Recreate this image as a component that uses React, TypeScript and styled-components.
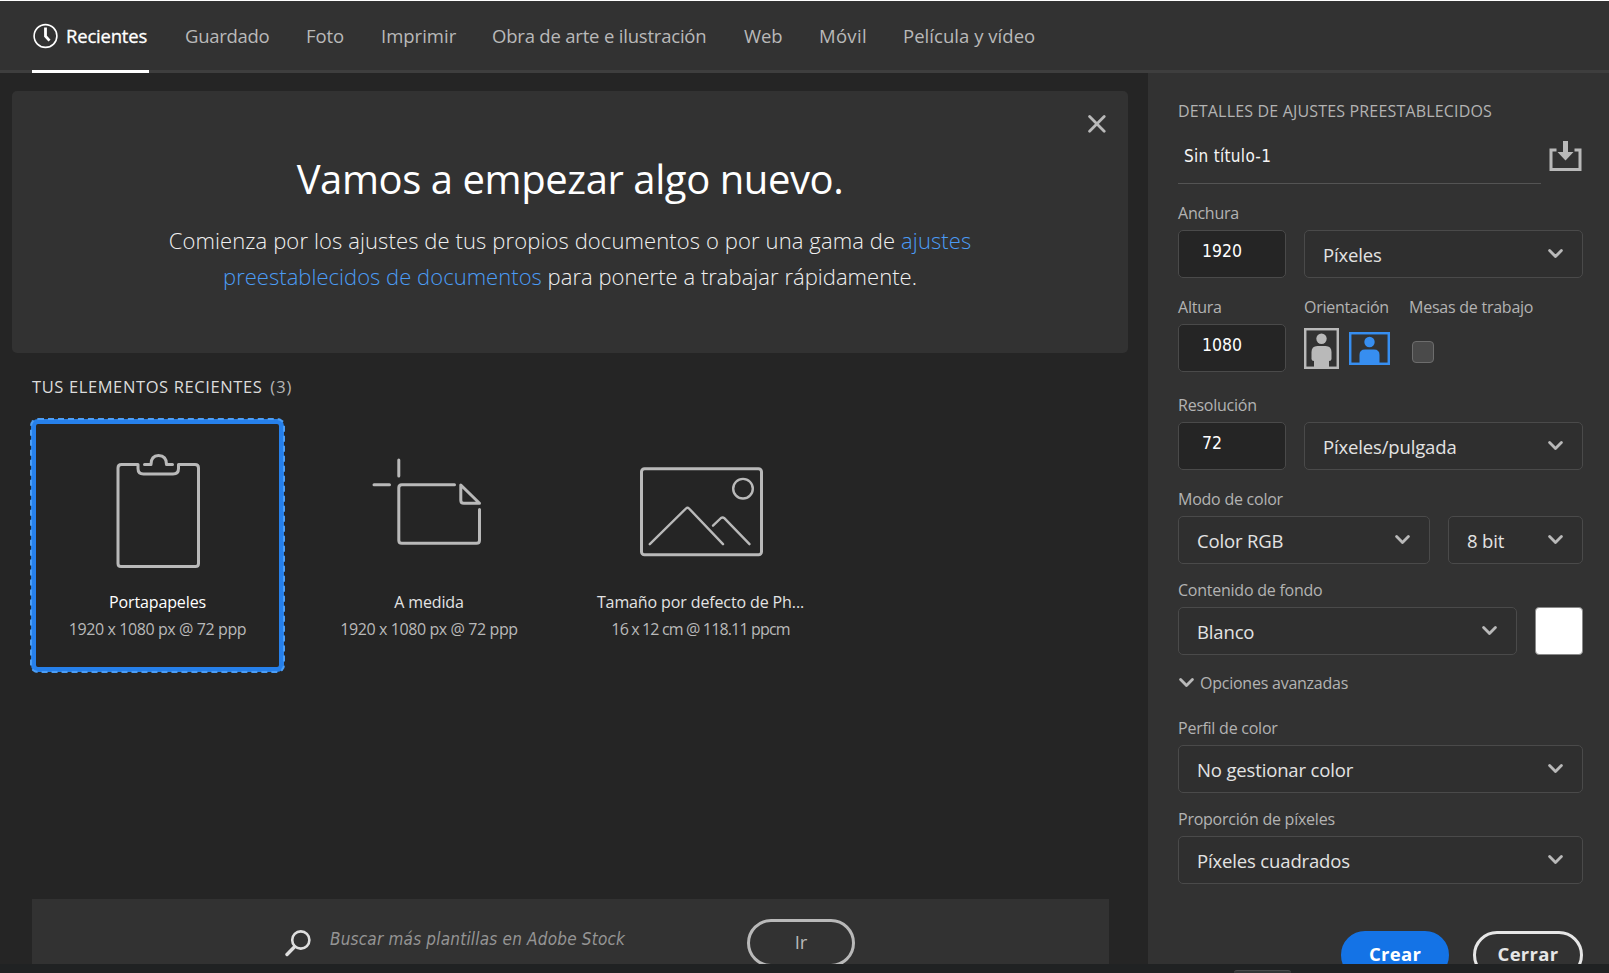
import React from 'react';
import styled, { createGlobalStyle } from 'styled-components';

const GlobalStyle = createGlobalStyle`
  *, *::before, *::after { box-sizing: border-box; }
  body {
    margin: 0;
    background: #202223;
    color: #e3e3e3;
    font-family: "Open Sans", "Noto Sans", sans-serif;
    overflow: hidden;
  }
`;

const Screen = styled.div`
  width: 1609px;
  height: 973px;
  display: flex;
  flex-direction: column;
  background: #202223;
  overflow: hidden;
`;

const Dialog = styled.div`
  height: 964px;
  display: flex;
  flex-direction: column;
  border-top: 1px solid #fff;
  background: #252525;
  overflow: hidden;
`;

const TabBar = styled.nav`
  flex: none;
  height: 72px;
  display: flex;
  gap: 36px;
  padding-left: 32px;
  background: #323232;
  box-shadow: inset 0 -3px #3e3e3e;
`;

const Tab = styled.a<{ $width: number; $active?: boolean; $spacing?: number }>`
  width: ${p => p.$width}px;
  display: flex;
  align-items: center;
  gap: 8px;
  padding-bottom: ${p => (p.$active ? 0 : 3)}px;
  border-bottom: ${p => (p.$active ? '3px solid #fff' : '0')};
  font-size: 18.5px;
  letter-spacing: ${p => p.$spacing ?? -0.1}px;
  white-space: nowrap;
  color: ${p => (p.$active ? '#fff' : '#b9b9b9')};
  -webkit-text-stroke: ${p => (p.$active ? '0.3px #fff' : '0')};
`;

const Body = styled.div`
  flex: 1;
  display: flex;
  min-height: 0;
`;

const Main = styled.main`
  width: 1148px;
  display: flex;
  flex-direction: column;
  padding: 18px 20px 0 12px;
`;

const Banner = styled.section`
  position: relative;
  flex: none;
  height: 262px;
  padding-top: 58px;
  border-radius: 5px;
  background: #323232;
  text-align: center;
`;

const CloseButton = styled.button`
  position: absolute;
  top: 24px;
  right: 22px;
  width: 18px;
  height: 18px;
  padding: 0;
  border: 0;
  background: none;
  svg { display: block; }
`;

const Headline = styled.h1`
  margin: 0;
  font-size: 40px;
  line-height: 60px;
  font-weight: 400;
  letter-spacing: -0.42px;
  color: #fff;
`;

const Intro = styled.p`
  margin: 13px 0 0;
  font-size: 22px;
  line-height: 36px;
  font-weight: 300;
  letter-spacing: 0.11px;
  color: #f0f0f0;
`;

const IntroLine = styled.span`
  display: block;
  & + & { letter-spacing: 0.03px; }
`;

const Link = styled.a`
  color: #4b9cf5;
`;

const SectionTitle = styled.h2`
  flex: none;
  margin: 22px 0 0 20px;
  font-size: 16.5px;
  line-height: 24px;
  font-weight: 400;
  letter-spacing: 0.61px;
  color: #dcdcdc;
  span { margin-left: 3px; letter-spacing: 1px; color: #b5b5b5; }
`;

const CardRow = styled.div`
  flex: none;
  display: flex;
  gap: 18.5px;
  margin: 20px 0 0 19px;
`;

const Card = styled.article<{ $selected?: boolean }>`
  width: 253px;
  height: 253px;
  display: flex;
  flex-direction: column;
  align-items: center;
  border: 5px solid ${p => (p.$selected ? '#2680eb' : 'transparent')};
  border-radius: 7px;
  outline: ${p => (p.$selected ? '2px dashed #4b9df5' : 'none')};
  outline-offset: -1px;
  svg {
    flex: none;
    margin-top: 16px;
    fill: none;
    stroke: #b9b9b9;
    stroke-width: 3;
    stroke-linecap: round;
    stroke-linejoin: round;
  }
`;

const CardName = styled.div<{ $bright?: boolean }>`
  margin-top: -1px;
  font-size: 16px;
  line-height: 27px;
  letter-spacing: -0.12px;
  white-space: nowrap;
  color: ${p => (p.$bright ? '#fff' : '#e3e3e3')};
`;

const CardSize = styled.div<{ $tight?: boolean }>`
  font-size: 16px;
  line-height: 27px;
  letter-spacing: ${p => (p.$tight ? -0.85 : -0.4)}px;
  white-space: nowrap;
  color: #b9b9b9;
`;

const StockBar = styled.div`
  flex: none;
  width: 1077px;
  height: 80px;
  display: flex;
  align-items: flex-start;
  margin: auto 0 -15px 20px;
  padding: 20px 0 0 253px;
  background: #323232;
`;

const StockQuery = styled.div`
  width: 417px;
  margin: 5px 0 0 19px;
  font-family: "DejaVu Sans Condensed", "DejaVu Sans", sans-serif;
  font-stretch: 75%;
  font-size: 17px;
  line-height: 31px;
  font-style: italic;
  letter-spacing: 0.2px;
  white-space: nowrap;
  color: #959595;
`;

const SearchGlyph = styled.svg`
  flex: none;
  margin-top: 11px;
`;

const PillButton = styled.button<{ $width: number; $kind: 'quiet' | 'primary' | 'secondary' }>`
  flex: none;
  width: ${p => p.$width}px;
  height: 48px;
  padding: 0 0 1px;
  border-radius: 24px;
  border: 3px solid ${p => ({ quiet: '#b9b9b9', primary: '#1473e6', secondary: '#e6e6e6' })[p.$kind]};
  background: ${p => (p.$kind === 'primary' ? '#1473e6' : 'transparent')};
  color: ${p => ({ quiet: '#b9b9b9', primary: '#fff', secondary: '#e6e6e6' })[p.$kind]};
  font-family: inherit;
  font-size: 18.5px;
  line-height: 1;
  font-weight: ${p => (p.$kind === 'quiet' ? 400 : 700)};
  letter-spacing: ${p => (p.$kind === 'quiet' ? 0 : 0.3)}px;
`;

const Panel = styled.aside`
  width: 461px;
  display: flex;
  flex-direction: column;
  padding: 26px 26px 0 30px;
  background: #323232;
`;

const PanelTitle = styled.h3`
  flex: none;
  margin: 0;
  font-size: 16px;
  line-height: 24px;
  font-weight: 400;
  letter-spacing: 0.17px;
  white-space: nowrap;
  color: #b3b3b3;
`;

const NameRow = styled.div`
  flex: none;
  height: 61px;
  display: flex;
  justify-content: space-between;
  margin-bottom: 17px;
`;

const NameInput = styled.div`
  width: 363px;
  padding: 15px 0 0 6px;
  border-bottom: 1px solid #545454;
  font-family: "DejaVu Sans Condensed", "DejaVu Sans", sans-serif;
  font-stretch: 75%;
  font-size: 17px;
  line-height: 36px;
  letter-spacing: 0.3px;
  color: #f5f5f5;
`;

const SaveGlyph = styled.svg`
  margin: 17px 1px 0 0;
`;

const FieldRow = styled.div<{ $after: number }>`
  flex: none;
  display: flex;
  gap: 18px;
  height: 77px;
  align-items: flex-end;
  margin-bottom: ${p => p.$after}px;
`;

const Field = styled.div<{ $width?: number }>`
  ${p => (p.$width ? `width: ${p.$width}px;` : 'flex: 1;')}
  height: 77px;
  display: flex;
  flex-direction: column;
`;

const Label = styled.label`
  flex: none;
  height: 29px;
  font-size: 16px;
  line-height: 24px;
  letter-spacing: -0.24px;
  white-space: nowrap;
  color: #b3b3b3;
`;

const NumberInput = styled.div`
  height: 48px;
  padding-left: 23px;
  border: 1px solid #4a4a4a;
  border-radius: 5px;
  background: #252525;
  font-family: "DejaVu Sans Condensed", "DejaVu Sans", sans-serif;
  font-stretch: 75%;
  font-size: 17.5px;
  line-height: 40px;
  color: #fff;
`;

const SelectBox = styled.div`
  height: 48px;
  display: flex;
  align-items: center;
  justify-content: space-between;
  padding: 1px 19px 0 18px;
  border: 1px solid #4a4a4a;
  border-radius: 5px;
  background: #2f2f2f;
  font-size: 18.5px;
  letter-spacing: -0.15px;
  white-space: nowrap;
  color: #e3e3e3;
  svg { margin-top: -2px; }
`;

const Swatch = styled.div`
  width: 48px;
  height: 48px;
  border: 1px solid #8a8a8a;
  border-radius: 4px;
  background: #fff;
`;

const Orientation = styled.div`
  display: flex;
  gap: 10px;
  padding-top: 4px;
  svg { display: block; }
  svg + svg { margin-top: 4px; }
`;

const Checkbox = styled.div`
  width: 22px;
  height: 22px;
  margin: 17px 0 0 3px;
  border: 1px solid #6d6d6d;
  border-radius: 4px;
  background: #4a4a4a;
`;

const Advanced = styled.div`
  flex: none;
  height: 24px;
  display: flex;
  align-items: center;
  gap: 6px;
  margin-bottom: 21px;
  font-size: 16px;
  letter-spacing: -0.24px;
  color: #b3b3b3;
  svg { margin: 0 0 1px 1px; }
`;

const Actions = styled.div`
  flex: none;
  display: flex;
  justify-content: flex-end;
  gap: 24px;
  margin-top: 33px;
`;

const Taskbar = styled.div`
  flex: 1;
  display: flex;
  align-items: flex-end;
  padding-left: 1234px;
  background: #202223;
`;

const TaskbarTab = styled.div`
  width: 57px;
  height: 3px;
  border-top: 1px solid #4a4b4c;
  border-radius: 4px 4px 0 0;
  background: #333536;
`;

const Chevron = () => (
  <svg width="15" height="10" viewBox="0 0 15 10" fill="none" stroke="#b9b9b9" strokeWidth="2.8" strokeLinecap="round" strokeLinejoin="round">
    <path d="M1.6 1.6 L7.5 7.6 L13.4 1.6" />
  </svg>
);

const Select = ({ children }: { children: React.ReactNode }) => (
  <SelectBox>
    {children}
    <Chevron />
  </SelectBox>
);

const ClockIcon = () => (
  <svg width="26" height="26" viewBox="0 0 26 26" fill="none" stroke="#fff">
    <circle cx="13.5" cy="13" r="11.4" strokeWidth="1.6" />
    <path d="M13.5 4.6 V13.2 L17.5 17.6" strokeWidth="2.8" />
  </svg>
);

const ClipboardIcon = () => (
  <svg width="243" height="150" viewBox="5 1 243 150">
    <path d="M107 25.5 H90.5 Q87 25.5 87 29 V124.5 Q87 127.5 90 127.5 H164.5 Q167.5 127.5 167.5 124.5 V29 Q167.5 25.5 164 25.5 H147.5 V29.5 Q147.5 35 142 35 H112.5 Q107 35 107 29.5 Z" />
    <path d="M113.5 25.5 H120 Q120 16.5 127.5 16.5 Q135.5 16.5 135.5 25.5 H141.5" />
  </svg>
);

const CustomIcon = () => (
  <svg width="243" height="150" viewBox="5 1 243 150">
    <path d="M95.8 21 V37 M71 45.7 H86.5" />
    <path d="M151.5 45.7 H98.8 Q95.8 45.7 95.8 48.7 V101.2 Q95.8 104.2 98.8 104.2 H173.5 Q176.5 104.2 176.5 101.2 V70.5" />
    <path d="M157.8 46 V61.3 Q157.8 64.3 160.8 64.3 H176.5 Z" />
  </svg>
);

const PhotoIcon = () => (
  <svg width="243" height="150" viewBox="5 1 243 150">
    <rect x="67.5" y="29.7" width="120" height="86" rx="3" />
    <g strokeWidth="2.4">
      <circle cx="169" cy="49.7" r="9.8" />
      <path d="M75.8 105.2 L112 69.5 Q113.5 68 115 69.5 L149 105.2" />
      <path d="M139 86.7 L147 79 Q148.7 77.7 150.3 79.2 L175.5 105.2" />
    </g>
  </svg>
);

const SearchIcon = () => (
  <SearchGlyph width="26" height="27" viewBox="0 0 26 27" fill="none" stroke="#dedede">
    <circle cx="15.8" cy="10" r="8.6" strokeWidth="2.6" />
    <path d="M9.6 16.8 L2 24.5" strokeWidth="3.4" strokeLinecap="round" />
  </SearchGlyph>
);

const SaveIcon = () => (
  <SaveGlyph width="33" height="32" viewBox="0 0 33 32" fill="none" stroke="#b9b9b9">
    <path d="M7.5 10 H2 V29.5 H31 V10 H25.5" strokeWidth="3" />
    <path d="M16.5 1 V14" strokeWidth="5" />
    <path d="M8.5 12 H24.5 L16.5 20.5 Z" fill="#b9b9b9" stroke="none" />
  </SaveGlyph>
);

const PortraitIcon = () => (
  <svg width="35" height="41" viewBox="0 0 35 41">
    <rect x="1.2" y="1.2" width="32.6" height="38.6" fill="none" stroke="#b9b9b9" strokeWidth="2.5" />
    <circle cx="17.5" cy="10.8" r="5.2" fill="#b9b9b9" />
    <path d="M7.5 24 Q7.5 18 13.5 18 H21.5 Q27.5 18 27.5 24 V31 Q27.5 33 25 33 V39 H10 V33 Q7.5 33 7.5 31 Z" fill="#b9b9b9" />
  </svg>
);

const LandscapeIcon = () => (
  <svg width="41" height="33" viewBox="0 0 41 33">
    <rect x="1.2" y="1.2" width="38.6" height="30.6" fill="none" stroke="#378ef0" strokeWidth="2.5" />
    <circle cx="20.5" cy="10" r="5.2" fill="#378ef0" />
    <path d="M10.5 31 V23 Q10.5 17.5 16 17.5 H25 Q30.5 17.5 30.5 23 V31 Z" fill="#378ef0" />
  </svg>
);

export default function App() {
  return (
    <Screen>
      <GlobalStyle />
      <Dialog>
        <TabBar>
          <Tab $width={117} $active $spacing={-0.2}><ClockIcon />Recientes</Tab>
          <Tab $width={85} $spacing={-0.3}>Guardado</Tab>
          <Tab $width={39}>Foto</Tab>
          <Tab $width={75} $spacing={0}>Imprimir</Tab>
          <Tab $width={216} $spacing={-0.2}>Obra de arte e ilustración</Tab>
          <Tab $width={39}>Web</Tab>
          <Tab $width={48} $spacing={0.3}>Móvil</Tab>
          <Tab $width={134} $spacing={0.04}>Película y vídeo</Tab>
        </TabBar>
        <Body>
          <Main>
            <Banner>
              <CloseButton aria-label="Cerrar aviso">
                <svg width="18" height="18" viewBox="0 0 18 18" stroke="#b9b9b9" strokeWidth="2.8" strokeLinecap="round">
                  <path d="M1.6 1.6 L16.2 16.2 M16.2 1.6 L1.6 16.2" />
                </svg>
              </CloseButton>
              <Headline>Vamos a empezar algo nuevo.</Headline>
              <Intro>
                <IntroLine>Comienza por los ajustes de tus propios documentos o por una gama de <Link>ajustes</Link></IntroLine>
                <IntroLine><Link>preestablecidos de documentos</Link> para ponerte a trabajar rápidamente.</IntroLine>
              </Intro>
            </Banner>
            <SectionTitle>TUS ELEMENTOS RECIENTES <span>(3)</span></SectionTitle>
            <CardRow>
              <Card $selected>
                <ClipboardIcon />
                <CardName $bright>Portapapeles</CardName>
                <CardSize>1920 x 1080 px @ 72 ppp</CardSize>
              </Card>
              <Card>
                <CustomIcon />
                <CardName>A medida</CardName>
                <CardSize>1920 x 1080 px @ 72 ppp</CardSize>
              </Card>
              <Card>
                <PhotoIcon />
                <CardName>Tamaño por defecto de Ph...</CardName>
                <CardSize $tight>16 x 12 cm @ 118.11 ppcm</CardSize>
              </Card>
            </CardRow>
            <StockBar>
              <SearchIcon />
              <StockQuery>Buscar más plantillas en Adobe Stock</StockQuery>
              <PillButton $width={108} $kind="quiet">Ir</PillButton>
            </StockBar>
          </Main>
          <Panel>
            <PanelTitle>DETALLES DE AJUSTES PREESTABLECIDOS</PanelTitle>
            <NameRow>
              <NameInput>Sin título-1</NameInput>
              <SaveIcon />
            </NameRow>
            <FieldRow $after={17}>
              <Field $width={108}>
                <Label>Anchura</Label>
                <NumberInput>1920</NumberInput>
              </Field>
              <Field><Label /><Select>Píxeles</Select></Field>
            </FieldRow>
            <FieldRow $after={21}>
              <Field $width={108}>
                <Label>Altura</Label>
                <NumberInput>1080</NumberInput>
              </Field>
              <Field $width={87}>
                <Label>Orientación</Label>
                <Orientation><PortraitIcon /><LandscapeIcon /></Orientation>
              </Field>
              <Field>
                <Label>Mesas de trabajo</Label>
                <Checkbox />
              </Field>
            </FieldRow>
            <FieldRow $after={17}>
              <Field $width={108}>
                <Label>Resolución</Label>
                <NumberInput>72</NumberInput>
              </Field>
              <Field><Label /><Select>Píxeles/pulgada</Select></Field>
            </FieldRow>
            <FieldRow $after={14}>
              <Field $width={252}>
                <Label>Modo de color</Label>
                <Select>Color RGB</Select>
              </Field>
              <Field><Label /><Select>8 bit</Select></Field>
            </FieldRow>
            <FieldRow $after={16}>
              <Field $width={339}>
                <Label>Contenido de fondo</Label>
                <Select>Blanco</Select>
              </Field>
              <Swatch />
            </FieldRow>
            <Advanced><Chevron />Opciones avanzadas</Advanced>
            <FieldRow $after={14}>
              <Field>
                <Label>Perfil de color</Label>
                <Select>No gestionar color</Select>
              </Field>
            </FieldRow>
            <FieldRow $after={14}>
              <Field>
                <Label>Proporción de píxeles</Label>
                <Select>Píxeles cuadrados</Select>
              </Field>
            </FieldRow>
            <Actions>
              <PillButton $width={108} $kind="primary">Crear</PillButton>
              <PillButton $width={110} $kind="secondary">Cerrar</PillButton>
            </Actions>
          </Panel>
        </Body>
      </Dialog>
      <Taskbar><TaskbarTab /></Taskbar>
    </Screen>
  );
}
